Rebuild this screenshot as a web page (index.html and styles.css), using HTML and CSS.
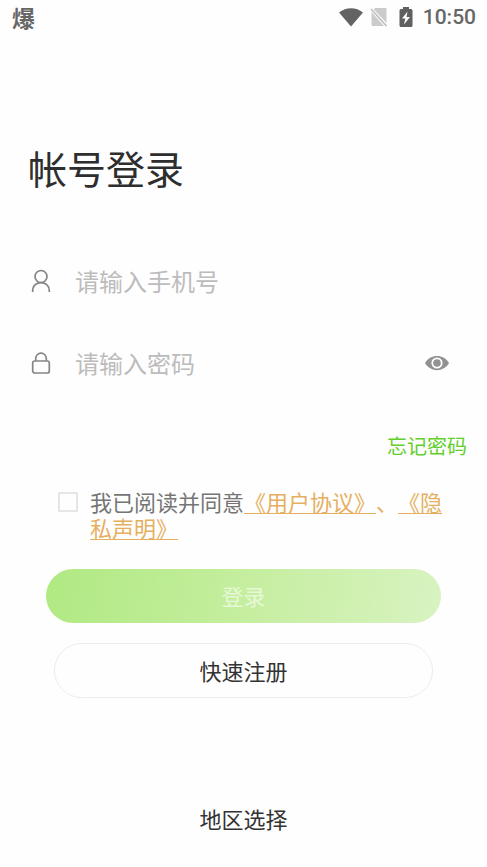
FILE: index.html
```html
<!DOCTYPE html>
<html lang="zh-CN">
<head>
<meta charset="utf-8">
<meta name="viewport" content="width=device-width, initial-scale=1">
<title>帐号登录</title>
<link rel="stylesheet" href="styles.css">
</head>
<body>
<header class="status">
  <span class="status-app">爆</span>
  <div class="status-icons">
    <svg width="24" height="19" viewBox="0 0 24 19" aria-hidden="true"><path fill="#636363" d="M0 4.500C7-1.300 17-1.300 24 4.500L12 18.500Z"/></svg>
    <svg class="sim" width="18" height="20" viewBox="0 0 18 20" aria-hidden="true"><path fill="#cbcbcb" d="M5 1h10.500q1 0 1 1v14L3.800 2.500ZM1.500 5 14 19H3q-1.500 0-1.500-1.500Z"/><path stroke="#bdbdbd" stroke-width="1.600" d="M1 2 16.500 19"/></svg>
    <svg class="battery" width="14" height="20" viewBox="0 0 14 20" aria-hidden="true"><path fill="#5f5f5f" d="M4 0h6v2h2q1.500 0 1.500 1.500v15q0 1.500-1.500 1.500H2Q.500 20 .500 18.500v-15Q.500 2 2 2h2Z"/><path fill="#fff" d="M8.500 4.500 3 11.500h3.300L5 17.500l6-7.500H7.500Z"/></svg>
    <time class="clock">10:50</time>
  </div>
</header>
<main class="page">
  <h1 class="title">帐号登录</h1>
  <form class="form">
    <div class="field">
      <label for="phone" aria-label="手机号"><svg class="field-icon" width="20" height="24" viewBox="0 0 20 24"><circle cx="10" cy="7.500" r="6"/><path d="M1.700 23v-1.500c0-10.600 16.600-10.600 16.600 0V23"/></svg></label>
      <input id="phone" type="tel" placeholder="请输入手机号">
    </div>
    <div class="field">
      <label for="password" aria-label="密码"><svg class="field-icon" width="20" height="24" viewBox="0 0 20 24"><rect x="1.700" y="10" width="16.600" height="12" rx="2"/><path d="M4.700 10V7.500a5.300 5.300 0 0 1 10.600 0V10"/></svg></label>
      <input id="password" type="password" placeholder="请输入密码">
      <button class="reveal" type="button" aria-label="显示密码"><svg width="24" height="16" viewBox="0 0 24 16"><path fill="#929292" d="M0 8C5-1.500 19-1.500 24 8 19 17.500 5 17.500 0 8Z"/><circle cx="12" cy="8" r="4.700" fill="none" stroke="#fff" stroke-width="1.800"/></svg></button>
    </div>
    <a class="forgot" href="#forgot">忘记密码</a>
    <div class="agree">
      <input id="agree" type="checkbox">
      <label for="agree">我已阅读并同意<a href="#terms">《用户协议》</a><span class="separator">、</span><a href="#privacy">《隐私声明》</a></label>
    </div>
    <button class="login" type="submit">登录</button>
    <button class="register" type="button">快速注册</button>
  </form>
  <button class="region" type="button">地区选择</button>
</main>
</body>
</html>
```
FILE: styles.css
```css
* {
  box-sizing: border-box;
}

body {
  margin: 0;
  min-height: 100vh;
  background: #fefefe;
  color: #333;
  font-family: "Noto Sans CJK SC", sans-serif;
  text-spacing-trim: space-all;
}

button,
input {
  margin: 0;
  padding: 0;
  border: 0;
  background: none;
  color: inherit;
  font: inherit;
}

svg {
  display: block;
}

.status {
  display: flex;
  align-items: center;
  justify-content: space-between;
  height: 34px;
  padding: 0 11px 0 12px;
  color: #666;
}

.status-app {
  font-size: 23px;
  font-weight: 700;
  line-height: 34px;
}

.status-icons {
  display: flex;
  align-items: center;
}

.sim {
  margin-left: 7px;
}

.battery {
  margin: 0 10px 0 11px;
}

.clock {
  font: 500 21px/34px Roboto, sans-serif;
}

.page {
  display: flex;
  flex-direction: column;
  padding: 105px 20px 24px;
}

.title {
  margin: 0 0 45px 8px;
  color: #2e2e2e;
  font-size: 39px;
  font-weight: 400;
  line-height: 56px;
}

.form {
  display: flex;
  flex-direction: column;
}

.field {
  display: flex;
  align-items: center;
  height: 82px;
  padding: 0 18px 0 11px;
}

.field input {
  flex: 1;
  min-width: 0;
  height: 76px;
  margin-left: 24px;
  border-bottom: 1px solid #fcfcfc;
  outline: 0;
  font-size: 24px;
}

.field input::placeholder {
  color: #bcbcbc;
  opacity: 1;
}

.field-icon {
  fill: none;
  stroke: #858585;
  stroke-width: 1.7;
}

.forgot {
  align-self: flex-end;
  margin-top: 27px;
  color: #64cf2c;
  font-size: 20px;
  line-height: 30px;
  text-decoration: none;
}

.agree {
  display: flex;
  align-items: flex-start;
  gap: 12px;
  margin: 27px 22px 29px 38px;
  color: #757575;
  font-size: 22px;
  line-height: 26px;
}

.agree input {
  flex: none;
  width: 20px;
  height: 20px;
  margin-top: 4px;
  border: 2px solid #e6e6e6;
  appearance: none;
}

.agree input:checked {
  background: #64cf2c;
}

.agree a,
.separator {
  color: #e6af60;
}

.agree a {
  text-decoration: underline;
  text-decoration-thickness: 1px;
  text-underline-offset: 2px;
  text-decoration-skip-ink: none;
}

.login,
.register {
  border-radius: 28px;
  font-size: 22px;
  line-height: 32px;
}

.login {
  height: 54px;
  margin: 0 26px;
  padding-bottom: 2px;
  background: linear-gradient(100deg, #b0e982, #c5ee9f 50%, #d8f3c1);
  color: #e6f8d8;
}

.register {
  height: 55px;
  margin: 20px 34px 0;
  padding-bottom: 2px;
  border: 1px solid #ececec;
}

.region {
  align-self: center;
  margin-top: 104px;
  font-size: 22px;
  line-height: 32px;
}
```
